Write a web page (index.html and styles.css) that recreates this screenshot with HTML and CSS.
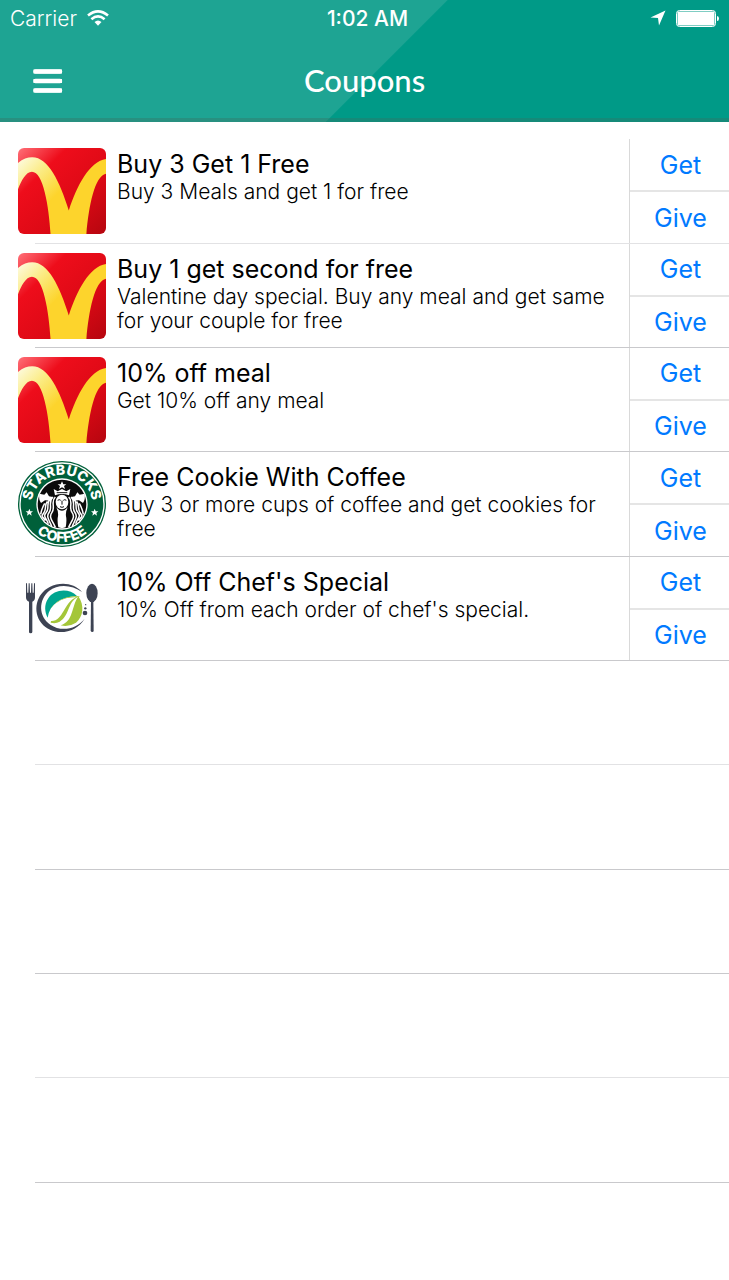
FILE: index.html
```
<!DOCTYPE html>
<html lang="en">
<head>
<meta charset="utf-8">
<meta name="viewport" content="width=device-width, initial-scale=1">
<title>Coupons</title>
<link rel="stylesheet" href="styles.css">
</head>
<body>
<svg class="defs" aria-hidden="true">
  <defs>
    <linearGradient id="red" x1="0" y1="0" x2="1" y2="1">
      <stop offset="0" stop-color="#ff7078"/><stop offset=".28" stop-color="#ee0d1b"/><stop offset=".65" stop-color="#dc0915"/><stop offset="1" stop-color="#b5060f"/>
    </linearGradient>
    <linearGradient id="gold" gradientUnits="userSpaceOnUse" x1="0" y1="35" x2="110" y2="145">
      <stop offset="0" stop-color="#fdfbe0"/><stop offset=".45" stop-color="#fbec86"/><stop offset="1" stop-color="#fdd42c"/>
    </linearGradient>
    <symbol id="arches" viewBox="0 0 265 257" preserveAspectRatio="none">
      <rect width="265" height="257" rx="18" fill="url(#red)"/>
      <path fill="url(#gold)" d="M0 45C15 33 28 28 43 28C91 28 126 101 153 187C177 112 216 40 265 33V77C231 83 213 174 206 257H98C93 174 76 71 42 71C23 71 10 99 0 123Z"/>
    </symbol>
  </defs>
</svg>

<header class="top">
  <div class="status">
    <div class="carrier">Carrier
      <svg class="wifi" viewBox="0 0 22 16" aria-hidden="true"><g fill="none" stroke="#fff" stroke-width="2.6"><path d="M1 5.5Q11-2.8 21 5.5M4.4 9.2Q11 3.5 17.6 9.2"/></g><path fill="#fff" d="M7.5 12Q11 9 14.5 12L11 15.7Z"/></svg>
    </div>
    <time class="clock">1:02 AM</time>
    <div class="power">
      <svg class="arrow" viewBox="0 0 16 16" aria-hidden="true"><path fill="#fff" d="M15.5.5L9 15.5L8 8L.5 7.5Z"/></svg>
      <svg class="battery" viewBox="0 0 43 17" aria-hidden="true"><rect x=".5" y=".5" width="39" height="16" rx="3" fill="none" stroke="#fff"/><rect x="1.500" y="1.500" width="37" height="14" rx="1" fill="#fff"/><path fill="#fff" d="M41 6Q43 6 43 8.500T41 11Z"/></svg>
    </div>
  </div>
  <div class="bar">
    <button class="menu" aria-label="Menu"><svg viewBox="0 0 30 26"><path fill="none" stroke="#fff" stroke-width="4.500" stroke-linecap="round" d="M2.500 3.500H27M2.500 13H27M2.500 22.500H27"/><path fill="none" stroke="#fff" stroke-width="4" d="M.5 3.500H29M.5 13H29M.5 22.500H29"/></svg></button>
    <h1 class="heading">Coupons</h1>
  </div>
</header>

<main>
<ul class="list">
  <li class="row">
    <svg class="logo" role="img" aria-label="McDonald's"><use href="#arches"/></svg>
    <div class="info"><h2 class="name">Buy 3 Get 1 Free</h2><p class="text">Buy 3 Meals and get 1 for free</p></div>
    <div class="actions"><button>Get</button><button>Give</button></div>
  </li>
  <li class="row">
    <svg class="logo" role="img" aria-label="McDonald's"><use href="#arches"/></svg>
    <div class="info"><h2 class="name">Buy 1 get second for free</h2><p class="text">Valentine day special. Buy any meal and get same for your couple for free</p></div>
    <div class="actions"><button>Get</button><button>Give</button></div>
  </li>
  <li class="row">
    <svg class="logo" role="img" aria-label="McDonald's"><use href="#arches"/></svg>
    <div class="info"><h2 class="name">10% off meal</h2><p class="text">Get 10% off any meal</p></div>
    <div class="actions"><button>Get</button><button>Give</button></div>
  </li>
  <li class="row">
    <svg class="logo" role="img" aria-label="Starbucks Coffee" viewBox="0 0 264 258" preserveAspectRatio="none">
      <defs><path id="arc-top" d="M50 169A91 89 0 1 1 214 169"/><path id="arc-bottom" d="M18 145A115 113 0 0 0 246 145"/></defs>
      <ellipse cx="132" cy="129" rx="132" ry="129" fill="#00603a"/>
      <ellipse cx="132" cy="129" rx="126" ry="123" fill="none" stroke="#fff" stroke-width="4"/>
      <circle cx="132" cy="129" r="77" fill="#fff"/>
      <circle cx="132" cy="129" r="73" fill="#0b0b0b"/>
      <g class="ring"><text><textPath href="#arc-top" startOffset="50%" text-anchor="middle">STARBUCKS</textPath></text><text><textPath href="#arc-bottom" startOffset="50%" text-anchor="middle">COFFEE</textPath></text></g>
      <g fill="#fff">
        <path d="M34 143l3 8h8l-6 5 2 8-7-5-7 5 2-8-6-5h8zM230 143l3 8h8l-6 5 2 8-7-5-7 5 2-8-6-5h8z"/>
        <path d="M132 61l4 9h9l-7 5 3 9-9-5-9 5 3-9-7-5h9z"/>
        <path d="M107 84l12 7 13-7 13 7 12-7-4 19q-21-8-42 0zM64 98l15 3 7-7 7 12 11 2-6 11-17-1-12 8q-8-12-5-28zM200 98l-15 3-7-7-7 12-11 2 6 11 17-1 12 8q8-12 5-28z"/>
        <ellipse cx="132" cy="123" rx="19" ry="22"/>
        <path d="M114 139Q122 150 120 166Q117 178 121 199Q132 204 143 199Q147 178 144 166Q142 150 150 139L140 147Q132 151 124 147Z"/>
      </g>
      <g fill="none" stroke="#fff" stroke-width="4.500">
        <path d="M112 108C97 121 113 139 102 154S103 178 112 199M105 108C89 122 104 139 94 153S91 173 101 195M98 112C82 126 96 141 85 154S83 168 91 188M88 121C78 134 87 142 77 156S74 164 82 179M80 127Q71 143 68 160"/>
        <path d="M152 108C167 121 151 139 162 154S161 178 152 199M159 108C175 122 160 139 170 153S173 173 163 195M166 112C182 126 168 141 179 154S181 168 173 188M176 121C186 134 177 142 187 156S190 164 182 179M184 127Q193 143 196 160"/>
      </g>
      <path fill="none" stroke="#111" stroke-width="3" d="M119 118q5-4 9 0M136 118q4-4 9 0M132 119v12M126 137q6 4 12 0M116 95h32"/>
    </svg>
    <div class="info"><h2 class="name">Free Cookie With Coffee</h2><p class="text">Buy 3 or more cups of coffee and get cookies for free</p></div>
    <div class="actions"><button>Get</button><button>Give</button></div>
  </li>
  <li class="row">
    <svg class="logo" role="img" aria-label="Plate with fork and spoon" viewBox="24 3 264 258">
      <g fill="#3d4353">
        <path d="M48 55h3l1 28h3l1-28h3l1 28h3l1-28h3l1 28h3l1-28h3v42q0 10-8 13v91q0 4-5 4t-5-4v-91q-9-3-9-13z"/>
        <ellipse cx="246" cy="84" rx="17" ry="28"/>
        <path d="M243 108h7l1 89q0 4-4 4t-5-4z"/>
        <path d="M216 81C193 54 152 49 119 66C78 87 67 139 94 174C127 216 197 208 224 161C200 192 154 202 121 179C85 154 85 105 117 78C145 56 185 59 216 81Z"/>
        <circle cx="225" cy="144" r="7"/><circle cx="226" cy="130" r="3.500"/><circle cx="227" cy="119" r="2"/>
      </g>
      <path fill="#00a58f" d="M201 93C176 68 132 73 114 101C102 119 104 141 113 158C119 118 150 96 201 93Z"/>
      <g fill="#a4c639">
        <path d="M205 94C224 121 220 156 198 173Q176 187 152 181C191 170 184 124 205 94Z"/>
        <path d="M211 93C172 104 181 151 149 170Q137 177 122 173L123 168C160 170 160 114 198 97Q148 95 121 132Q147 92 211 93Z"/>
      </g>
    </svg>
    <div class="info"><h2 class="name">10% Off Chef's Special</h2><p class="text">10% Off from each order of chef's special.</p></div>
    <div class="actions"><button>Get</button><button>Give</button></div>
  </li>
  <li class="row"></li>
  <li class="row"></li>
  <li class="row"></li>
  <li class="row"></li>
  <li class="row"></li>
</ul>
</main>
</body>
</html>
```
FILE: styles.css
```
* { box-sizing: border-box; }
body { margin: 0; background: #fff; color: #000; font-family: Inter, "Liberation Sans", sans-serif; }
h1, h2, p, ul { margin: 0; padding: 0; }
button { padding: 0; border: 0; background: none; font: inherit; cursor: pointer; }
svg { display: block; }
.defs { position: absolute; width: 0; height: 0; }

.top {
  color: #fff;
  border-bottom: 4px solid rgb(60 110 95 / 35%);
  background: linear-gradient(135deg, #1ea493 316px, #009a87 317px) border-box;
}
.status { display: grid; grid-template-columns: 1fr auto 1fr; align-items: center; height: 36px; padding: 0 10px; font-size: 21px; }
.carrier { display: flex; align-items: center; gap: 10px; font-weight: 300; }
.wifi { width: 22px; height: 16px; }
.clock { font-weight: 500; padding-left: 6px; }
.power { display: flex; align-items: center; justify-content: flex-end; gap: 10px; }
.arrow { width: 16px; height: 16px; }
.battery { width: 43px; height: 17px; }
.bar { display: grid; grid-template-columns: 1fr auto 1fr; align-items: center; height: 82px; padding: 8px 33px 0; }
.menu { width: 30px; height: 26px; }
.heading { font: 500 31px/40px Lato, sans-serif; padding-bottom: 2px; }

.list { list-style: none; padding-top: 17px; }
.row { position: relative; display: flex; height: 104px; padding-left: 18px; }
.row:nth-child(3n + 1) { height: 105px; }
.row::after { content: ""; position: absolute; left: 35px; right: 0; bottom: 0; height: 1px; background: #c9c9cc; }
.row:nth-child(5n + 1)::after, .row:nth-child(9)::after { background: #e2e2e4; }
.logo { flex: none; width: 88px; height: 86px; margin-top: 9px; overflow: visible; }
.ring { fill: #fff; font: 800 42px Inter, sans-serif; }
.info { flex: 1; padding: 9px 16px 0 11px; }
.name { font-size: 25px; line-height: 32px; font-weight: 400; }
.text { font-size: 21px; line-height: 24px; font-weight: 300; }
.actions { display: flex; flex-direction: column; width: 100px; padding-bottom: 1px; border-left: 1px solid #d9d9d9; }
.actions button { flex: 1; padding-left: 2px; font-size: 25px; color: #007aff; }
.actions button + button { border-top: 2px solid #e5e5e5; }
```
